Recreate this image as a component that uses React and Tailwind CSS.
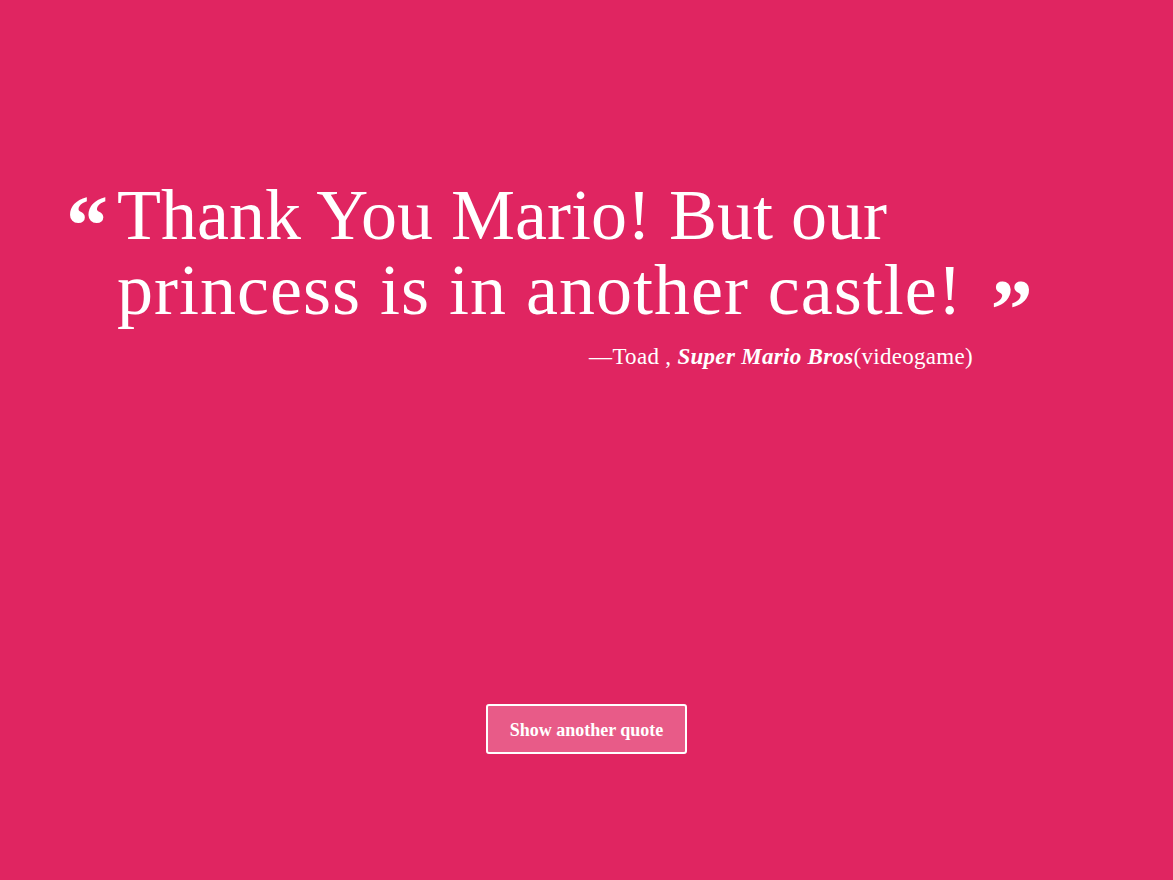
const quote = {
  lines: ["Thank You Mario! But our", "princess is in another castle!"],
  author: "Toad",
  source: "Super Mario Bros",
  kind: "(videogame)",
};

const App = () => {
  return (
    <div className="min-h-screen w-full bg-[#e02561] text-white font-['Liberation_Serif',serif]">
      <div className="flex flex-col items-start pt-[178px] pl-[66px]">
        <blockquote className="flex items-start">
          <span className="w-[51px] text-[84px] leading-none font-bold pt-[6px] shrink-0">
            &ldquo;
          </span>
          <p className="text-[72px] leading-[75px] whitespace-nowrap">
            {quote.lines[0]}
            <br />
            <span className="tracking-[1px]">{quote.lines[1]}</span>
            <span className="relative top-[15px] ml-[28px] text-[84px] font-bold align-top leading-none">
              &rdquo;
            </span>
          </p>
        </blockquote>
        <div className="w-[907px] text-right text-[23px] tracking-[0.3px] mt-[3px]">
          &mdash;{quote.author} , <em className="font-bold">{quote.source}</em>
          {quote.kind}
        </div>
      </div>

      <div className="flex justify-center mt-[329px]">
        <button className="w-[201px] h-[50px] rounded-[3px] border-2 border-white bg-white/25 text-[18px] font-bold text-white pt-[3px]">
          Show another quote
        </button>
      </div>
    </div>
  );
};

export default App;
